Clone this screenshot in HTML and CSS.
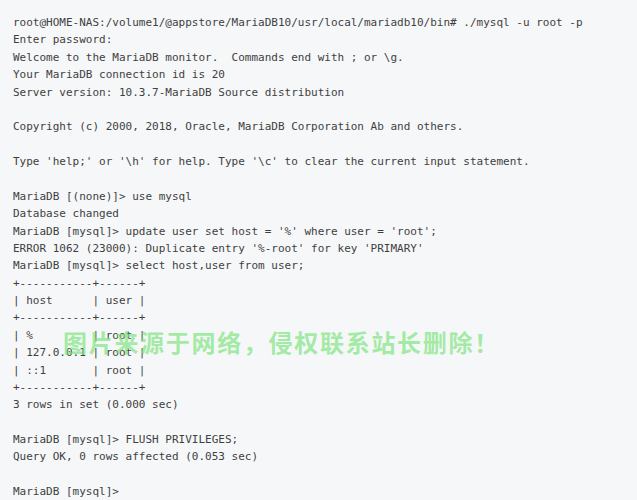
FILE: index.html
```html
<!DOCTYPE html>
<html lang="zh">
<head>
<meta charset="utf-8">
<title>MariaDB</title>
<link rel="stylesheet" href="styles.css">
</head>
<body>
<div class="page">
<pre class="term">root@HOME-NAS:/volume1/@appstore/MariaDB10/usr/local/mariadb10/bin# ./mysql -u root -p
Enter password:
Welcome to the MariaDB monitor.  Commands end with ; or \g.
Your MariaDB connection id is 20
Server version: 10.3.7-MariaDB Source distribution

Copyright (c) 2000, 2018, Oracle, MariaDB Corporation Ab and others.

Type 'help;' or '\h' for help. Type '\c' to clear the current input statement.

MariaDB [(none)]&gt; use mysql
Database changed
MariaDB [mysql]&gt; update user set host = '%' where user = 'root';
ERROR 1062 (23000): Duplicate entry '%-root' for key 'PRIMARY'
MariaDB [mysql]&gt; select host,user from user;
+-----------+------+
| host      | user |
+-----------+------+
| %         | root |
| 127.0.0.1 | root |
| ::1       | root |
+-----------+------+
3 rows in set (0.000 sec)

MariaDB [mysql]&gt; FLUSH PRIVILEGES;
Query OK, 0 rows affected (0.053 sec)

MariaDB [mysql]&gt;</pre>
<div class="watermark">图片来源于网络，侵权联系站长删除！</div>
</div>
</body>
</html>
```
FILE: styles.css
```css
html, body {
  margin: 0;
  padding: 0;
  background: #f6f7f9;
}
.page {
  position: relative;
  width: 637px;
  height: 500px;
  overflow: hidden;
}
.term {
  margin: 0;
  padding: 14px 0 0 13px;
  font-family: "DejaVu Sans Mono", "Liberation Mono", monospace;
  font-size: 11px;
  line-height: 17.37px;
  color: #3f3f3f;
}
.watermark {
  position: absolute;
  left: 63px;
  top: 326px;
  font-family: "Noto Sans CJK SC", sans-serif;
  font-weight: 700;
  font-size: 24px;
  letter-spacing: 1.7px;
  line-height: 32px;
  color: rgba(120, 228, 120, 0.68);
  white-space: nowrap;
}
```
